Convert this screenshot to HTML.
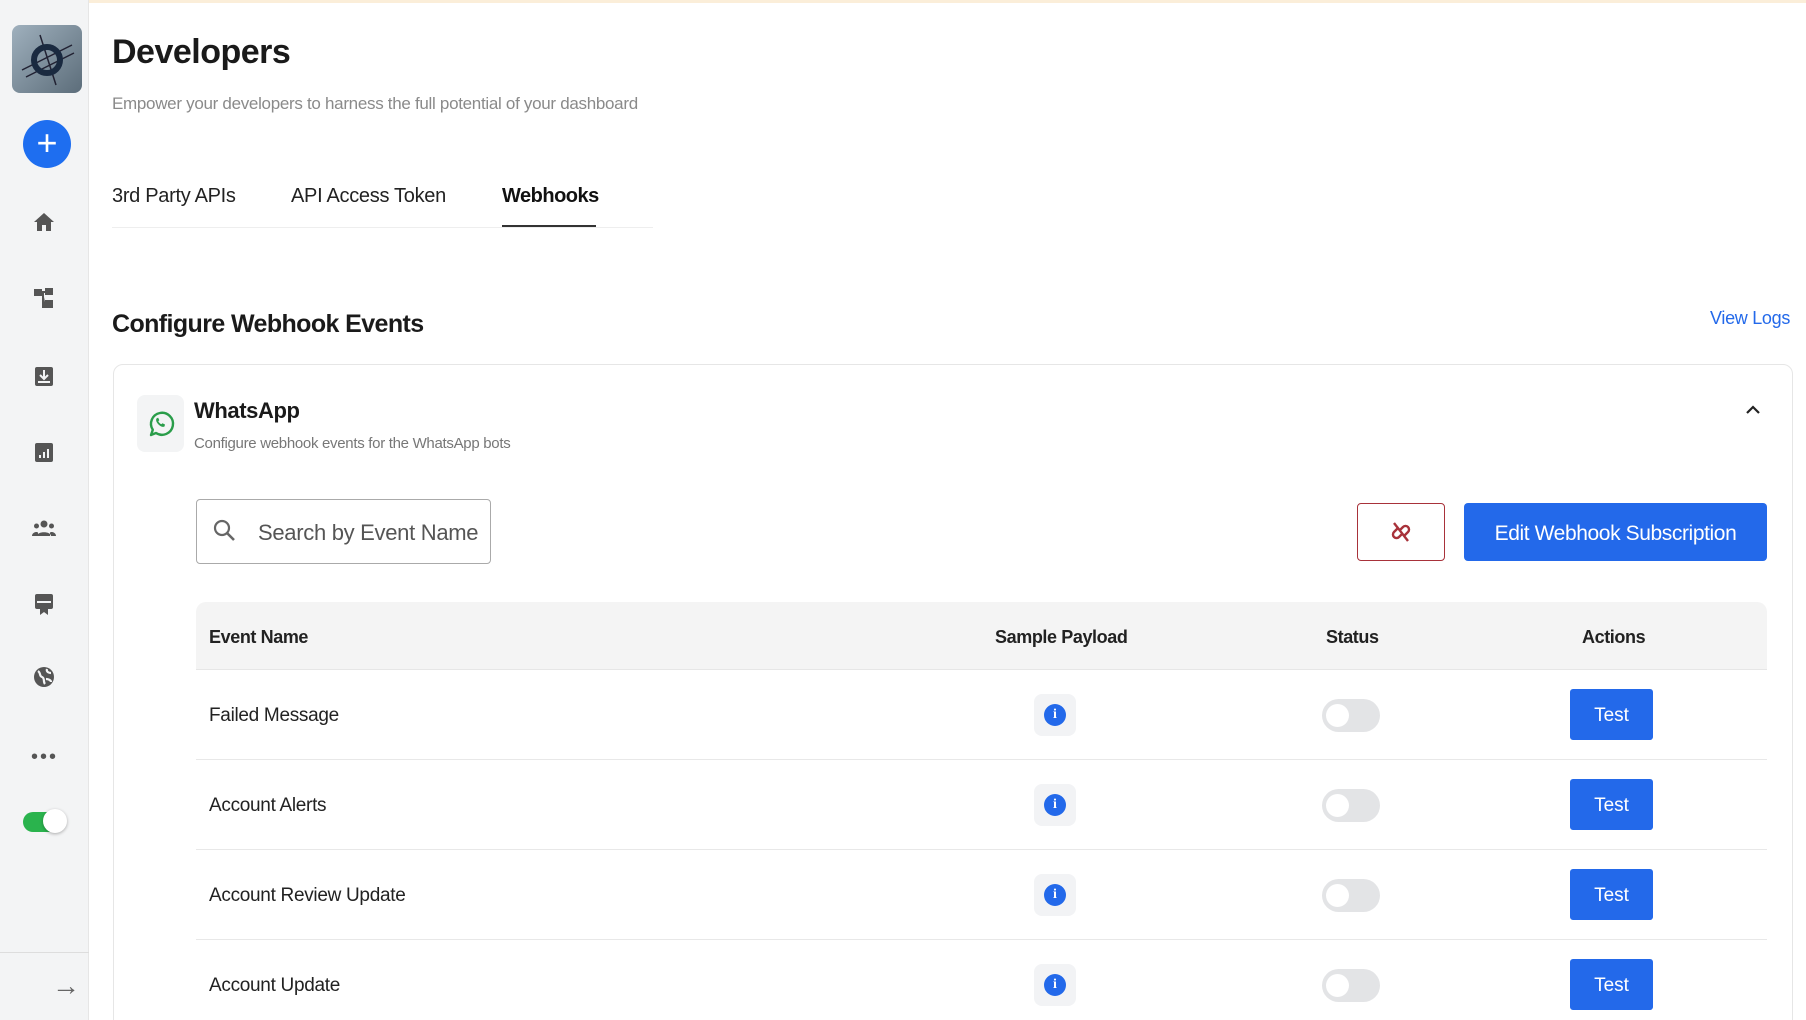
<!DOCTYPE html>
<html><head><meta charset="utf-8"><style>
*{box-sizing:border-box;margin:0;padding:0}
html,body{width:1806px;height:1020px;overflow:hidden}
body{background:#fff;font-family:"Liberation Sans",sans-serif;color:#222;position:relative}
.a{position:absolute}
.side{left:0;top:0;width:89px;height:1020px;background:#f3f4f5;border-right:1px solid #e6e6e6}
.ic{left:32px;width:24px;height:24px}
.row{left:196px;width:1571px;height:90px;border-bottom:1px solid #e8e8e8}
.row .n{position:absolute;left:13px;top:0;line-height:92px;font-size:19px;color:#222;letter-spacing:-0.3px}
.info{position:absolute;left:838px;top:24px;width:42px;height:42px;background:#f2f3f5;border-radius:8px}
.info span{position:absolute;left:10px;top:10px;width:22px;height:22px;border-radius:50%;background:#2369ea;color:#fff;font:bold 14px "Liberation Serif",serif;text-align:center;line-height:22px}
.tg{position:absolute;left:1126px;top:29px;width:58px;height:33px;border-radius:17px;background:#e3e4e6}
.tg:after{content:"";position:absolute;left:4px;top:5px;width:23px;height:23px;border-radius:50%;background:#fff}
.tb{position:absolute;left:1374px;top:19px;width:83px;height:51px;background:#2369ea;border-radius:3px;color:#fff;font-size:19px;text-align:center;line-height:53px}
</style></head><body>
<div class="a" style="left:0;top:0;width:1806px;height:3px;background:#fbeed9"></div>
<div class="a side"></div>
<div class="a" style="left:12px;top:25px;width:70px;height:68px;border-radius:8px;background:linear-gradient(135deg,#9fb0bd,#5c6d7a)"><svg width="70" height="68"><path d="M10 45 L60 20 M14 52 L62 28 M28 10 L44 60" stroke="#223" stroke-width="1.5"/><circle cx="35" cy="35" r="13" fill="none" stroke="#1a2a40" stroke-width="6"/></svg></div>
<div class="a" style="left:23px;top:120px;width:48px;height:48px;border-radius:50%;background:#1e6ef0;color:#fff;font-size:36px;text-align:center;line-height:46px">+</div>
<svg class="a ic" style="top:210px" viewBox="0 0 24 24"><path d="M12 3L2 12h3v9h5v-6h4v6h5v-9h3z" fill="#555"/></svg>
<svg class="a ic" style="top:286px" viewBox="0 0 24 24"><path d="M3 4h6v5H3zM14 3h6v5h-6zM14 15h6v6h-6zM9 6h5M11 6v15h3" fill="#555" stroke="#555" stroke-width="2"/></svg>
<svg class="a ic" style="top:364px" viewBox="0 0 24 24"><rect x="3" y="3" width="18" height="19" rx="2" fill="#555"/><path d="M12 6v9M8 11l4 4 4-4" stroke="#f3f4f5" stroke-width="2" fill="none"/><rect x="6" y="17" width="12" height="2" fill="#f3f4f5"/></svg>
<svg class="a ic" style="top:440px" viewBox="0 0 24 24"><rect x="3" y="3" width="18" height="19" rx="2" fill="#555"/><path d="M8 18v-3M12 18v-6M16 18v-9" stroke="#f3f4f5" stroke-width="2"/></svg>
<svg class="a ic" style="top:517px" viewBox="0 0 24 24"><circle cx="12" cy="7" r="3.5" fill="#555"/><circle cx="4.5" cy="9" r="2.5" fill="#555"/><circle cx="19.5" cy="9" r="2.5" fill="#555"/><path d="M5 19c0-5 14-5 14 0zM0 19c0-4 6-5 6-3v3zM24 19c0-4-6-5-6-3v3z" fill="#555"/></svg>
<svg class="a ic" style="top:592px" viewBox="0 0 24 24"><rect x="3" y="2" width="18" height="15" rx="2" fill="#555"/><rect x="5" y="9" width="14" height="2" fill="#f3f4f5"/><path d="M8 17v6l4-3 4 3v-6z" fill="#555"/></svg>
<svg class="a ic" style="top:665px" viewBox="0 0 24 24"><circle cx="12" cy="12" r="10" fill="#555"/><path d="M6 6c3 2 1 5 4 6s1 5 3 7M15 4c-1 3 2 4 4 4M14 14c2 0 5 1 5 3" stroke="#f3f4f5" stroke-width="2.2" fill="none"/></svg>
<div class="a" style="left:31px;top:746px;font-size:20px;color:#555;letter-spacing:2px">•••</div>
<div class="a" style="left:23px;top:812px;width:36px;height:20px;border-radius:10px;background:#2ab34d"></div>
<div class="a" style="left:43px;top:809px;width:24px;height:24px;border-radius:50%;background:#fff;box-shadow:0 1px 3px rgba(0,0,0,.3)"></div>
<div class="a" style="left:0;top:952px;width:89px;height:1px;background:#ddd"></div>
<div class="a" style="left:52px;top:970px;font-size:28px;color:#666">→</div>

<div class="a" style="left:112px;top:33px;font-size:34px;font-weight:bold;color:#1a1a1a;letter-spacing:-0.5px">Developers</div>
<div class="a" style="left:112px;top:94px;font-size:17px;color:#8a8a8a;letter-spacing:-0.3px">Empower your developers to harness the full potential of your dashboard</div>
<div class="a" style="left:112px;top:185px;font-size:20px;color:#222;letter-spacing:-0.3px">3rd Party APIs</div>
<div class="a" style="left:291px;top:185px;font-size:20px;color:#222;letter-spacing:-0.3px">API Access Token</div>
<div class="a" style="left:502px;top:185px;font-size:20px;color:#111;font-weight:bold;letter-spacing:-0.5px">Webhooks</div>
<div class="a" style="left:112px;top:227px;width:541px;height:1px;background:#eee"></div>
<div class="a" style="left:502px;top:225px;width:94px;height:2px;background:#333"></div>
<div class="a" style="left:112px;top:310px;font-size:25px;font-weight:bold;color:#1a1a1a;letter-spacing:-0.6px">Configure Webhook Events</div>
<div class="a" style="left:1710px;top:308px;font-size:18px;color:#2369ea;letter-spacing:-0.3px">View Logs</div>

<div class="a" style="left:113px;top:364px;width:1680px;height:700px;border:1px solid #e6e6e6;border-radius:10px"></div>
<div class="a" style="left:137px;top:395px;width:47px;height:57px;border-radius:8px;background:#f3f4f5"><svg class="a" style="left:8px;top:13px" width="32" height="32" viewBox="0 0 32 32"><path d="M6 27l1.8-5.2A11 11 0 1 1 11 25z" fill="none" stroke="#2a9d4a" stroke-width="2.4" stroke-linejoin="round"/><path d="M11.5 10.5c-1 1.5 0 4 2 6s4.5 3 6 2l.5-2-2.5-1.2-1.2 1c-1.2-.5-2.5-1.8-3-3l1-1.2-1.2-2.5z" fill="#2a9d4a"/></svg></div>
<div class="a" style="left:194px;top:398px;font-size:22px;font-weight:bold;color:#1a1a1a;letter-spacing:-0.4px">WhatsApp</div>
<div class="a" style="left:194px;top:435px;font-size:15px;color:#777;letter-spacing:-0.3px">Configure webhook events for the WhatsApp bots</div>
<svg class="a" style="left:1745px;top:404px" width="16" height="12"><path d="M2 9l6-6 6 6" stroke="#222" stroke-width="2.2" fill="none"/></svg>

<div class="a" style="left:196px;top:499px;width:295px;height:65px;border:1px solid #aaa;border-radius:4px"></div>
<svg class="a" style="left:212px;top:518px" width="26" height="26"><circle cx="10" cy="10" r="7" stroke="#666" stroke-width="2.2" fill="none"/><path d="M15 15l7 7" stroke="#666" stroke-width="2.6"/></svg>
<div class="a" style="left:258px;top:520px;font-size:22px;color:#555;letter-spacing:-0.3px">Search by Event Name</div>
<div class="a" style="left:1357px;top:503px;width:88px;height:58px;border:1.5px solid #a8323a;border-radius:4px"><svg class="a" style="left:30px;top:16px" width="26" height="24" viewBox="0 0 26 24"><path d="M10 8l-4 4a3.5 3.5 0 0 0 5 5l3-3M16 16l4-4a3.5 3.5 0 0 0-5-5l-3 3M6 3l14 18" stroke="#a8323a" stroke-width="2.4" fill="none"/></svg></div>
<div class="a" style="left:1464px;top:503px;width:303px;height:58px;background:#2369ea;border-radius:4px;color:#fff;font-size:21px;text-align:center;line-height:62px;letter-spacing:-0.4px">Edit Webhook Subscription</div>

<div class="a" style="left:196px;top:602px;width:1571px;height:68px;background:#f4f4f4;border-radius:10px 10px 0 0;border-bottom:1px solid #e6e6e6;font-size:18px;font-weight:bold;color:#222;line-height:70px;letter-spacing:-0.4px">
<span class="a" style="left:13px">Event Name</span><span class="a" style="left:799px">Sample Payload</span><span class="a" style="left:1130px">Status</span><span class="a" style="left:1386px">Actions</span></div>
<div class="a row" style="top:670px"><div class="n">Failed Message</div><div class="info"><span>i</span></div><div class="tg"></div><div class="tb">Test</div></div>
<div class="a row" style="top:760px"><div class="n">Account Alerts</div><div class="info"><span>i</span></div><div class="tg"></div><div class="tb">Test</div></div>
<div class="a row" style="top:850px"><div class="n">Account Review Update</div><div class="info"><span>i</span></div><div class="tg"></div><div class="tb">Test</div></div>
<div class="a row" style="top:940px;border-bottom:none"><div class="n">Account Update</div><div class="info"><span>i</span></div><div class="tg"></div><div class="tb">Test</div></div>
</body></html>
